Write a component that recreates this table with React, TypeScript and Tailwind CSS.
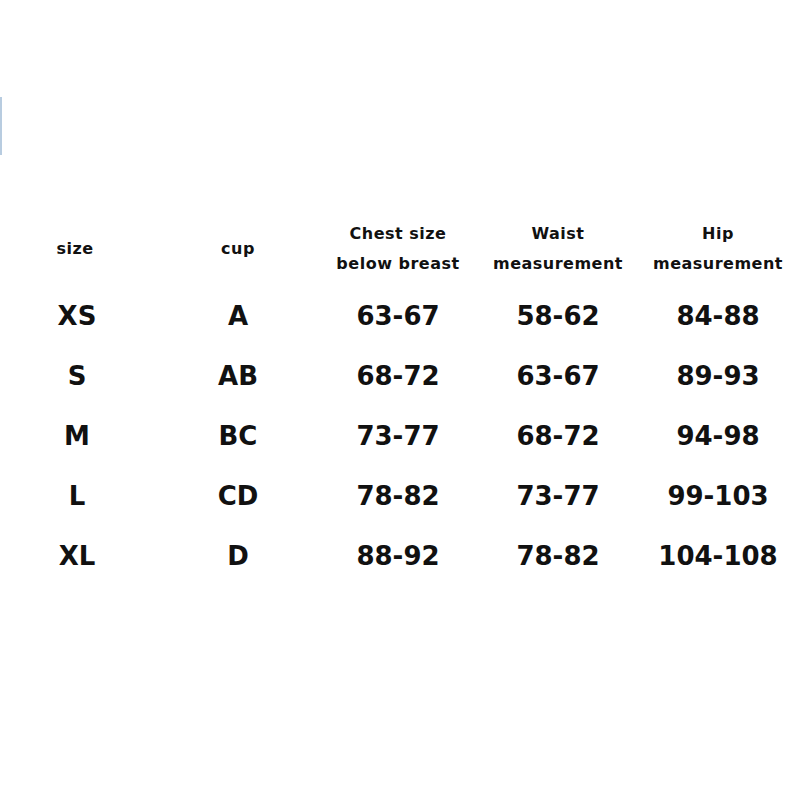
import React from "react";

const rows = [
  ["XS", "A", "63-67", "58-62", "84-88"],
  ["S", "AB", "68-72", "63-67", "89-93"],
  ["M", "BC", "73-77", "68-72", "94-98"],
  ["L", "CD", "78-82", "73-77", "99-103"],
  ["XL", "D", "88-92", "78-82", "104-108"],
];

const headers = [
  ["size"],
  ["cup"],
  ["Chest size", "below breast"],
  ["Waist", "measurement"],
  ["Hip", "measurement"],
];

export default function App() {
  return (
    <div
      className="relative w-[800px] h-[800px] bg-white text-[#111]"
      style={{ fontFamily: '"DejaVu Sans", sans-serif' }}
    >
      <div className="absolute left-0 top-[97px] w-[2px] h-[58px] bg-[#b8cce0]" />
      <div className="pt-[219px] ml-[-2px]">
        <div className="grid grid-cols-5 w-[800px]">
          {headers.map((h, i) => (
            <div
              key={i}
              className={`flex flex-col items-center justify-center h-[60px] text-[16px] font-bold leading-[30px] tracking-[0.5px] ${i === 0 ? "pr-[6px]" : ""}`}
            >
              {h.map((l, j) => (
                <span key={j}>{l}</span>
              ))}
            </div>
          ))}
        </div>
        <div className="mt-[7px] flex flex-col">
          {rows.map((r, i) => (
            <div key={i} className="grid grid-cols-5 w-[800px] h-[60px] items-center">
              {r.map((c, j) => (
                <div
                  key={j}
                  className={`text-center text-[26px] font-bold leading-[60px] ${j === 0 ? "pr-[2px]" : ""}`}
                >
                  {c}
                </div>
              ))}
            </div>
          ))}
        </div>
      </div>
    </div>
  );
}
